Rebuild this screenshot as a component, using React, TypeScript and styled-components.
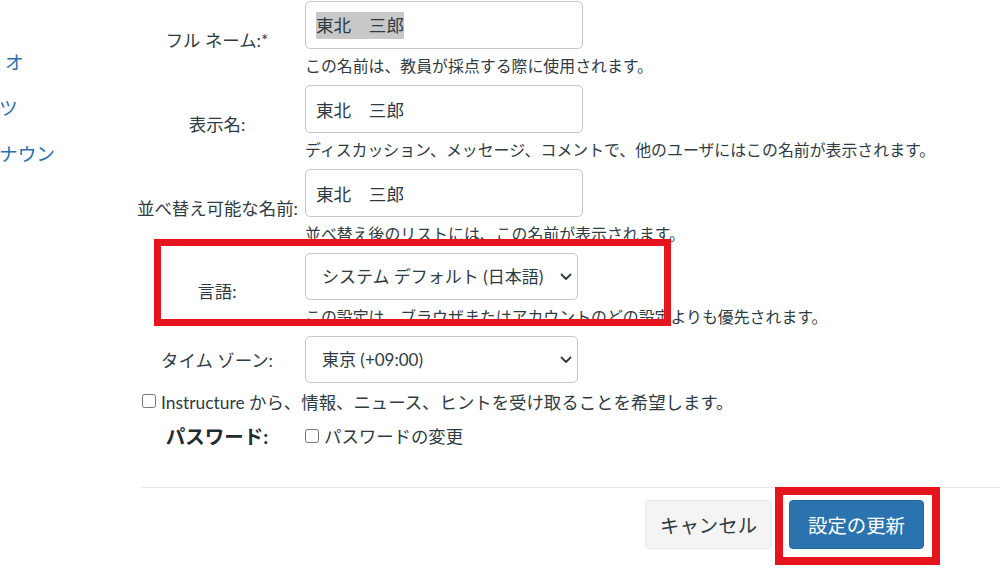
import React from 'react';
import styled, { createGlobalStyle } from 'styled-components';

const GlobalStyle = createGlobalStyle`
  html, body {
    margin: 0;
    padding: 0;
    background: #fff;
    overflow: hidden;
  }
  body {
    font-family: Lato, 'Noto Sans CJK JP', sans-serif;
    color: #2d3b45;
  }
`;

const Page = styled.div`
  display: flex;
  width: 1000px;
  height: 582px;
  overflow: hidden;
`;

const Nav = styled.nav`
  flex: 0 0 120px;
  padding-top: 39px;
  display: flex;
  flex-direction: column;
`;

const NavItem = styled.a<{ $indent?: number }>`
  display: block;
  height: 46px;
  line-height: 46px;
  margin-left: ${(p) => p.$indent ?? 0}px;
  font-size: 18.7px;
  color: #2b6fb3;
  white-space: nowrap;
  text-decoration: none;
`;

const Main = styled.main`
  flex: 1;
  padding-top: 1px;
  display: flex;
  flex-direction: column;
`;

const Fields = styled.div`
  padding-left: 17px;
  display: flex;
  flex-direction: column;
`;

const Row = styled.div`
  position: relative;
  display: grid;
  grid-template-columns: 160px 278px;
  column-gap: 8px;
  align-items: center;
  margin-bottom: 8px;
`;

const Label = styled.label<{ $bold?: boolean }>`
  text-align: center;
  font-size: ${(p) => (p.$bold ? 19.5 : 17.4)}px;
  font-weight: ${(p) => (p.$bold ? 700 : 400)};
  color: ${(p) => (p.$bold ? '#1f2a31' : '#2d3b45')};
  white-space: nowrap;
`;

const Field = styled.div`
  display: flex;
  flex-direction: column;
`;

const TextBox = styled.div`
  box-sizing: border-box;
  height: 48px;
  width: 278px;
  border: 1px solid #c3c8cc;
  border-radius: 5px;
  padding: 0 10px;
  display: flex;
  align-items: center;
  font-size: 17.6px;
  background: #fff;
`;

const Selected = styled.span`
  background: #c8c8c8;
  line-height: 27px;
`;

const Help = styled.div`
  margin-top: 6px;
  height: 22px;
  line-height: 22px;
  font-size: 15.9px;
  white-space: nowrap;
`;

const SelectWrap = styled.div`
  position: relative;
  width: 273px;
`;

const Select = styled.select`
  appearance: none;
  box-sizing: border-box;
  width: 273px;
  height: 47px;
  border: 1px solid #c3c8cc;
  border-radius: 5px;
  padding: 0 18px 0 16px;
  font-family: Lato, 'Noto Sans CJK JP', sans-serif;
  font-size: 17px;
  color: #2d3b45;
  background: #fff;
`;

const Chevron = styled.svg`
  position: absolute;
  right: 6px;
  top: 50%;
  margin-top: -4px;
  pointer-events: none;
`;

const Highlight = styled.div<{ $left: number; $top: number; $w: number; $h: number; $border: number }>`
  position: absolute;
  left: ${(p) => p.$left}px;
  top: ${(p) => p.$top}px;
  width: ${(p) => p.$w}px;
  height: ${(p) => p.$h}px;
  box-sizing: border-box;
  border: ${(p) => p.$border}px solid #e6151d;
  pointer-events: none;
`;

const CheckLine = styled.label`
  display: flex;
  align-items: center;
  height: 24px;
  font-size: 17.4px;
  white-space: nowrap;
`;

const Check = styled.input<{ $first?: boolean }>`
  width: 14px;
  height: 14px;
  margin: 0 5px 0 ${(p) => (p.$first ? 0 : 4)}px;
`;

const OptIn = styled.div`
  margin-top: -2px;
  margin-left: 1px;
`;

const PasswordRow = styled(Row)`
  margin-top: 8px;
`;

const Footer = styled.div`
  margin-top: 29px;
  margin-left: 21px;
  border-top: 1px solid #e6e8ea;
  padding: 12px 76px 0 0;
  display: flex;
  justify-content: flex-end;
  gap: 17px;
`;

const Button = styled.button<{ $primary?: boolean }>`
  position: relative;
  height: 49px;
  padding: 0 ${(p) => (p.$primary ? 18 : 14)}px;
  border-radius: 4px;
  border: 1px solid ${(p) => (p.$primary ? '#2466a0' : '#e6e8ea')};
  background: ${(p) => (p.$primary ? '#2a73af' : '#f4f4f4')};
  color: ${(p) => (p.$primary ? '#fff' : '#2d3b45')};
  font-family: Lato, 'Noto Sans CJK JP', sans-serif;
  font-size: 19.4px;
  white-space: nowrap;
`;

const ChevronIcon = () => (
  <Chevron width="12" height="8" viewBox="0 0 12 8">
    <path d="M1.5 1.5 L6 6 L10.5 1.5" fill="none" stroke="#2d3b45" strokeWidth="1.8" strokeLinecap="round" strokeLinejoin="round" />
  </Chevron>
);

export default function App() {
  return (
    <>
      <GlobalStyle />
      <Page>
        <Nav>
          <NavItem $indent={5}>オ</NavItem>
          <NavItem $indent={-1}>ツ</NavItem>
          <NavItem $indent={-1}>ナウン</NavItem>
        </Nav>
        <Main>
          <Fields>
            <Row>
              <Label>フル ネーム:*</Label>
              <Field>
                <TextBox>
                  <Selected>東北　三郎</Selected>
                </TextBox>
                <Help>この名前は、教員が採点する際に使用されます。</Help>
              </Field>
            </Row>
            <Row>
              <Label>表示名:</Label>
              <Field>
                <TextBox>東北　三郎</TextBox>
                <Help>ディスカッション、メッセージ、コメントで、他のユーザにはこの名前が表示されます。</Help>
              </Field>
            </Row>
            <Row>
              <Label>並べ替え可能な名前:</Label>
              <Field>
                <TextBox>東北　三郎</TextBox>
                <Help>並べ替え後のリストには、この名前が表示されます。</Help>
              </Field>
            </Row>
            <Row>
              <Label>言語:</Label>
              <Field>
                <SelectWrap>
                  <Select defaultValue="ja">
                    <option value="ja">システム デフォルト (日本語)</option>
                  </Select>
                  <ChevronIcon />
                </SelectWrap>
                <Help>この設定は、ブラウザまたはアカウントのどの設定よりも優先されます。</Help>
              </Field>
              <Highlight $left={17} $top={-14} $w={517} $h={87} $border={7} />
            </Row>
            <Row>
              <Label>タイム ゾーン:</Label>
              <Field>
                <SelectWrap>
                  <Select defaultValue="tokyo">
                    <option value="tokyo">東京 (+09:00)</option>
                  </Select>
                  <ChevronIcon />
                </SelectWrap>
              </Field>
            </Row>
            <OptIn>
              <CheckLine>
                <Check type="checkbox" />
                Instructure から、情報、ニュース、ヒントを受け取ることを希望します。
              </CheckLine>
            </OptIn>
            <PasswordRow>
              <Label $bold>パスワード:</Label>
              <CheckLine>
                <Check type="checkbox" $first />
                パスワードの変更
              </CheckLine>
            </PasswordRow>
          </Fields>
          <Footer>
            <Button>キャンセル</Button>
            <Button $primary>
              設定の更新
              <Highlight $left={-15} $top={-14} $w={165} $h={78} $border={8} />
            </Button>
          </Footer>
        </Main>
      </Page>
    </>
  );
}
